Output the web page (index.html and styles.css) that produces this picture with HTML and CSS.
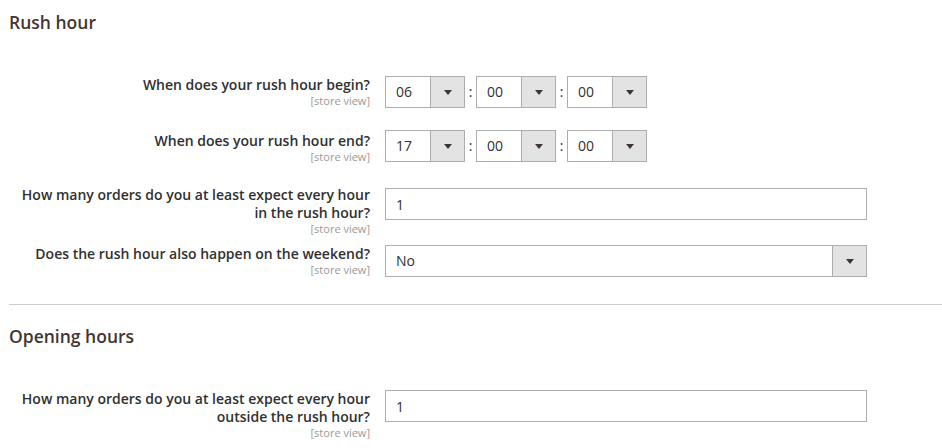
FILE: index.html
```html
<!DOCTYPE html>
<html lang="en">
<head>
<meta charset="utf-8">
<title>Rush hour settings</title>
<link rel="stylesheet" href="styles.css">
</head>
<body>
<div class="page">
  <h2 class="section-title">Rush hour</h2>
  <div class="fields first">
    <div class="row r1">
      <div class="label">When does your rush hour begin?<span class="scope">[store view]</span></div>
      <div class="control time">
        <div class="select small"><span class="value">06</span><span class="arrow"></span></div>
        <span class="colon">:</span>
        <div class="select small"><span class="value">00</span><span class="arrow"></span></div>
        <span class="colon">:</span>
        <div class="select small"><span class="value">00</span><span class="arrow"></span></div>
      </div>
    </div>
    <div class="row r2">
      <div class="label">When does your rush hour end?<span class="scope">[store view]</span></div>
      <div class="control time">
        <div class="select small"><span class="value">17</span><span class="arrow"></span></div>
        <span class="colon">:</span>
        <div class="select small"><span class="value">00</span><span class="arrow"></span></div>
        <span class="colon">:</span>
        <div class="select small"><span class="value">00</span><span class="arrow"></span></div>
      </div>
    </div>
    <div class="row r3">
      <div class="label">How many orders do you at least expect every hour in the rush hour?<span class="scope">[store view]</span></div>
      <div class="control low"><input class="text" type="text" value="1"></div>
    </div>
    <div class="row r4">
      <div class="label">Does the rush hour also happen on the weekend?<span class="scope">[store view]</span></div>
      <div class="control">
        <div class="select wide"><span class="value">No</span><span class="arrow"></span></div>
      </div>
    </div>
  </div>
  <hr class="separator">
  <h2 class="section-title second">Opening hours</h2>
  <div class="fields last">
    <div class="row r5">
      <div class="label">How many orders do you at least expect every hour outside the rush hour?<span class="scope">[store view]</span></div>
      <div class="control"><input class="text" type="text" value="1"></div>
    </div>
  </div>
</div>
</body>
</html>
```

FILE: styles.css
```css
html, body {
  margin: 0;
  padding: 0;
  background: #ffffff;
}

body {
  font-family: "Open Sans", "Liberation Sans", sans-serif;
  color: #303030;
  font-size: 14px;
}

.page {
  padding-left: 9px;
}

.section-title {
  margin: 0;
  padding-top: 11px;
  font-size: 17.5px;
  font-weight: 600;
  line-height: 23px;
  color: #41362f;
}

.section-title.second {
  padding-top: 20px;
}

.fields.first {
  padding-top: 41px;
}

.fields.last {
  padding-top: 41px;
}

.row {
  display: grid;
  grid-template-columns: 361px 482px;
  column-gap: 15px;
  align-items: start;
}

.r2 { margin-top: 21px; }
.r3 { margin-top: 22px; }
.r4 { margin-top: 9px; }

.label {
  padding-top: 1px;
  text-align: right;
  font-weight: 600;
  font-size: 14px;
  line-height: 18px;
  color: #303030;
}

.r2 .label {
  padding-top: 3px;
}

.scope {
  display: block;
  font-weight: 400;
  font-size: 11px;
  line-height: 13px;
  color: #999999;
}

.control {
  margin-top: 1px;
  display: flex;
  align-items: center;
}

.control.low {
  margin-top: 3px;
}

.colon {
  width: 11px;
  text-align: center;
  font-size: 14px;
  line-height: 32px;
  color: #303030;
}

.select {
  box-sizing: border-box;
  height: 32px;
  border: 1px solid #adadad;
  background: #ffffff;
  display: flex;
  align-items: stretch;
}

.select.small {
  width: 80px;
}

.select.wide {
  width: 482px;
}

.select .value {
  flex: 1;
  padding-left: 10px;
  line-height: 30px;
  font-size: 14px;
  color: #303030;
}

.select .arrow {
  width: 33px;
  background: #e3e3e3;
  border-left: 1px solid #adadad;
  display: flex;
  align-items: center;
  justify-content: center;
}

.select .arrow::after {
  content: "";
  width: 0;
  height: 0;
  border-left: 4px solid transparent;
  border-right: 4px solid transparent;
  border-top: 5px solid #41362f;
  margin-top: 1px;
}

.text {
  box-sizing: border-box;
  width: 482px;
  height: 32px;
  margin: 0;
  border: 1px solid #adadad;
  border-radius: 0;
  padding: 0 10px;
  font-family: "Open Sans", "Liberation Sans", sans-serif;
  font-size: 14px;
  color: #303030;
  background: #ffffff;
  outline: none;
}

.separator {
  margin: 27px 0 0 0;
  border: 0;
  border-top: 1px solid #cccccc;
  height: 0;
}
```
